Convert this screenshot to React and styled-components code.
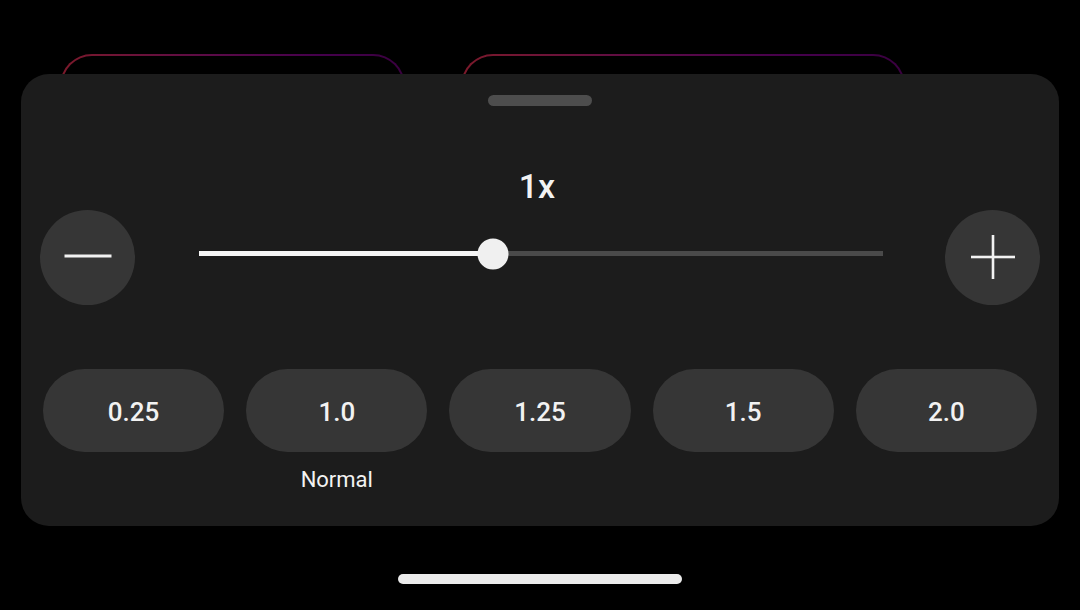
import React from 'react';
import styled, { createGlobalStyle } from 'styled-components';

const GlobalStyle = createGlobalStyle`
  html, body {
    margin: 0;
    padding: 0;
    background: #000;
  }
  body {
    font-family: Roboto, "Noto Sans", sans-serif;
    color: #f2f2f2;
  }
`;

const Screen = styled.div`
  width: 1080px;
  height: 610px;
  background: #000;
  display: flex;
  flex-direction: column;
  overflow: hidden;
`;

const CardsPeek = styled.div`
  margin-top: 54px;
  height: 20px;
  padding-left: 60px;
  display: flex;
  gap: 56px;
  overflow: hidden;
`;

const PeekCard = styled.div`
  width: ${(p) => p.$width}px;
  height: 60px;
  flex-shrink: 0;
  padding: 2px 2px 0;
  box-sizing: border-box;
  border-radius: 32px 32px 0 0;
  background: linear-gradient(90deg, #7c1a2b 0%, #5a0a48 45%, #45004c 75%, #3a0040 100%);
`;

const PeekInner = styled.div`
  height: 100%;
  background: #000;
  border-radius: 30px 30px 0 0;
`;

const Sheet = styled.div`
  margin: 0 21px;
  height: 452px;
  background: #1c1c1c;
  border-radius: 28px;
  display: flex;
  flex-direction: column;
  align-items: center;
  padding-top: 21px;
  box-sizing: border-box;
`;

const Handle = styled.div`
  width: 104px;
  height: 11px;
  border-radius: 6px;
  background: #4d4d4d;
`;

const SpeedLabel = styled.div`
  margin: 60px 6px 0 0;
  font-size: 34px;
  line-height: 40px;
  font-weight: 500;
  color: #f2f2f2;
`;

const SliderRow = styled.div`
  margin-top: 4px;
  width: 100%;
  box-sizing: border-box;
  padding: 0 19px;
  display: flex;
  align-items: center;
`;

const RoundButton = styled.button`
  width: 95px;
  height: 95px;
  flex-shrink: 0;
  border: none;
  border-radius: 50%;
  background: #363636;
  display: flex;
  align-items: center;
  justify-content: center;
  padding: 0;
  cursor: pointer;

  svg {
    margin-bottom: ${(p) => p.$lift || 0}px;
  }
`;

const Track = styled.div`
  flex: 1;
  margin: 0 62px 8px 64px;
  height: 5px;
  background: #4a4a4a;
  position: relative;
`;

const TrackFill = styled.div`
  height: 100%;
  background: #f5f5f5;
`;

const Thumb = styled.div`
  position: absolute;
  top: 50%;
  width: 31px;
  height: 31px;
  border-radius: 50%;
  background: #f0f0f0;
  transform: translate(-50%, -50%);
`;

const Presets = styled.div`
  margin-top: 64px;
  width: 100%;
  box-sizing: border-box;
  padding: 0 22px;
  display: grid;
  grid-template-columns: repeat(5, 1fr);
  gap: 22px;
`;

const Preset = styled.div`
  display: flex;
  flex-direction: column;
  align-items: center;
`;

const Pill = styled.button`
  width: 100%;
  height: 83px;
  border: none;
  border-radius: 42px;
  background: #363636;
  color: #f2f2f2;
  font-family: Roboto, "Noto Sans", sans-serif;
  font-size: 26px;
  font-weight: 500;
  padding: 3px 0 0;
  cursor: pointer;
`;

const Caption = styled.div`
  margin-top: 15px;
  font-size: 22px;
  line-height: 26px;
  color: #f2f2f2;
`;

const HomeBar = styled.div`
  margin: 48px auto 0;
  width: 284px;
  height: 10px;
  border-radius: 5px;
  background: #ebebeb;
`;

const MinusIcon = () => (
  <svg width="48" height="6" viewBox="0 0 48 6">
    <rect x="0.5" y="1.5" width="47" height="3" fill="#f2f2f2" />
  </svg>
);

const PlusIcon = () => (
  <svg width="46" height="46" viewBox="0 0 46 46">
    <rect x="1" y="21.7" width="44" height="2.6" fill="#f2f2f2" />
    <rect x="21.7" y="1" width="2.6" height="44" fill="#f2f2f2" />
  </svg>
);

const presets = [
  { value: '0.25' },
  { value: '1.0', caption: 'Normal' },
  { value: '1.25' },
  { value: '1.5' },
  { value: '2.0' },
];

export default function App() {
  const progress = 0.43;
  return (
    <>
      <GlobalStyle />
      <Screen>
        <CardsPeek>
          <PeekCard $width={345}>
            <PeekInner />
          </PeekCard>
          <PeekCard $width={444}>
            <PeekInner />
          </PeekCard>
        </CardsPeek>

        <Sheet>
          <Handle />
          <SpeedLabel>1x</SpeedLabel>

          <SliderRow>
            <RoundButton aria-label="Slower" $lift={3}>
              <MinusIcon />
            </RoundButton>
            <Track>
              <TrackFill style={{ width: `${progress * 100}%` }} />
              <Thumb style={{ left: `${progress * 100}%` }} />
            </Track>
            <RoundButton aria-label="Faster" $lift={2}>
              <PlusIcon />
            </RoundButton>
          </SliderRow>

          <Presets>
            {presets.map((p) => (
              <Preset key={p.value}>
                <Pill>{p.value}</Pill>
                {p.caption && <Caption>{p.caption}</Caption>}
              </Preset>
            ))}
          </Presets>
        </Sheet>

        <HomeBar />
      </Screen>
    </>
  );
}
